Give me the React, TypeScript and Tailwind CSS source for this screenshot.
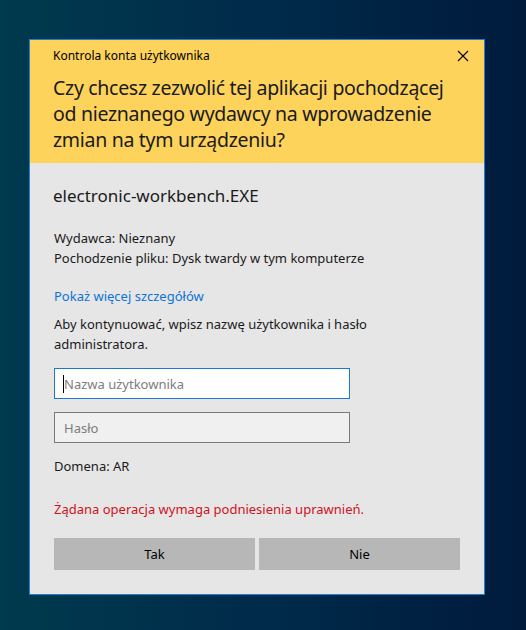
import React from 'react';

const font = { fontFamily: '"Segoe UI", "Noto Sans", "Open Sans", sans-serif' };

function CloseIcon() {
  return (
    <svg width="12" height="12" viewBox="0 0 12 12" className="text-black">
      <path d="M1 1L11 11M11 1L1 11" stroke="currentColor" strokeWidth="1.1" fill="none" />
    </svg>
  );
}

export default function App() {
  return (
    <div
      className="w-[526px] h-[630px] overflow-hidden bg-gradient-to-r from-[#003a4e] via-[#002b4a] to-[#001a3c] pt-[39px] pl-[29px]"
      style={font}
    >
      <div className="w-[456px] h-[556px] border border-[#1a7fd6] flex flex-col">
        {/* header */}
        <div className="bg-[#fdd35c] pl-[23px] pr-[15px] pb-[10px]">
          <div className="h-[32px] flex items-center justify-between">
            <span className="text-[12px] text-black">Kontrola konta użytkownika</span>
            <CloseIcon />
          </div>
          <p className="mt-[3px] text-[19.5px] leading-[26px] tracking-[-0.3px] text-[#1a1a1a] whitespace-nowrap">
            Czy chcesz zezwolić tej aplikacji pochodzącej
            <br />
            od nieznanego wydawcy na wprowadzenie
            <br />
            zmian na tym urządzeniu?
          </p>
        </div>

        {/* body */}
        <div className="flex-1 bg-[#e6e6e6] px-[24px] text-[13px] leading-[20px] text-[#1a1a1a]">
          <div className="mt-[21px] text-[17px] leading-[24px] -ml-px">electronic-workbench.EXE</div>

          <div className="mt-[20px]">
            <div>Wydawca: Nieznany</div>
            <div>Pochodzenie pliku: Dysk twardy w tym komputerze</div>
          </div>

          <div className="mt-[18px] text-[#0b74d4]">Pokaż więcej szczegółów</div>

          <div className="mt-[8px]">
            Aby kontynuować, wpisz nazwę użytkownika i hasło
            <br />
            administratora.
          </div>

          <div className="mt-[14px] w-[296px] h-[31px] border border-[#1a78d0] bg-white flex items-center pl-[8px]">
            <span className="w-px h-[18px] bg-black" />
            <span className="text-[#7d7d7d]">Nazwa użytkownika</span>
          </div>

          <div className="mt-[13px] w-[296px] h-[31px] border border-[#7a7a7a] bg-[#f0f0f0] flex items-center pl-[9px]">
            <span className="text-[#7d7d7d]">Hasło</span>
          </div>

          <div className="mt-[13px]">Domena: AR</div>

          <div className="mt-[23px] text-[#d0111c]">Żądana operacja wymaga podniesienia uprawnień.</div>

          <div className="mt-[19px] flex gap-[4px]">
            <button className="w-[201px] h-[32px] bg-[#b7b7b7] text-[13px] text-black">Tak</button>
            <button className="w-[201px] h-[32px] bg-[#b7b7b7] text-[13px] text-black">Nie</button>
          </div>
        </div>
      </div>
    </div>
  );
}
